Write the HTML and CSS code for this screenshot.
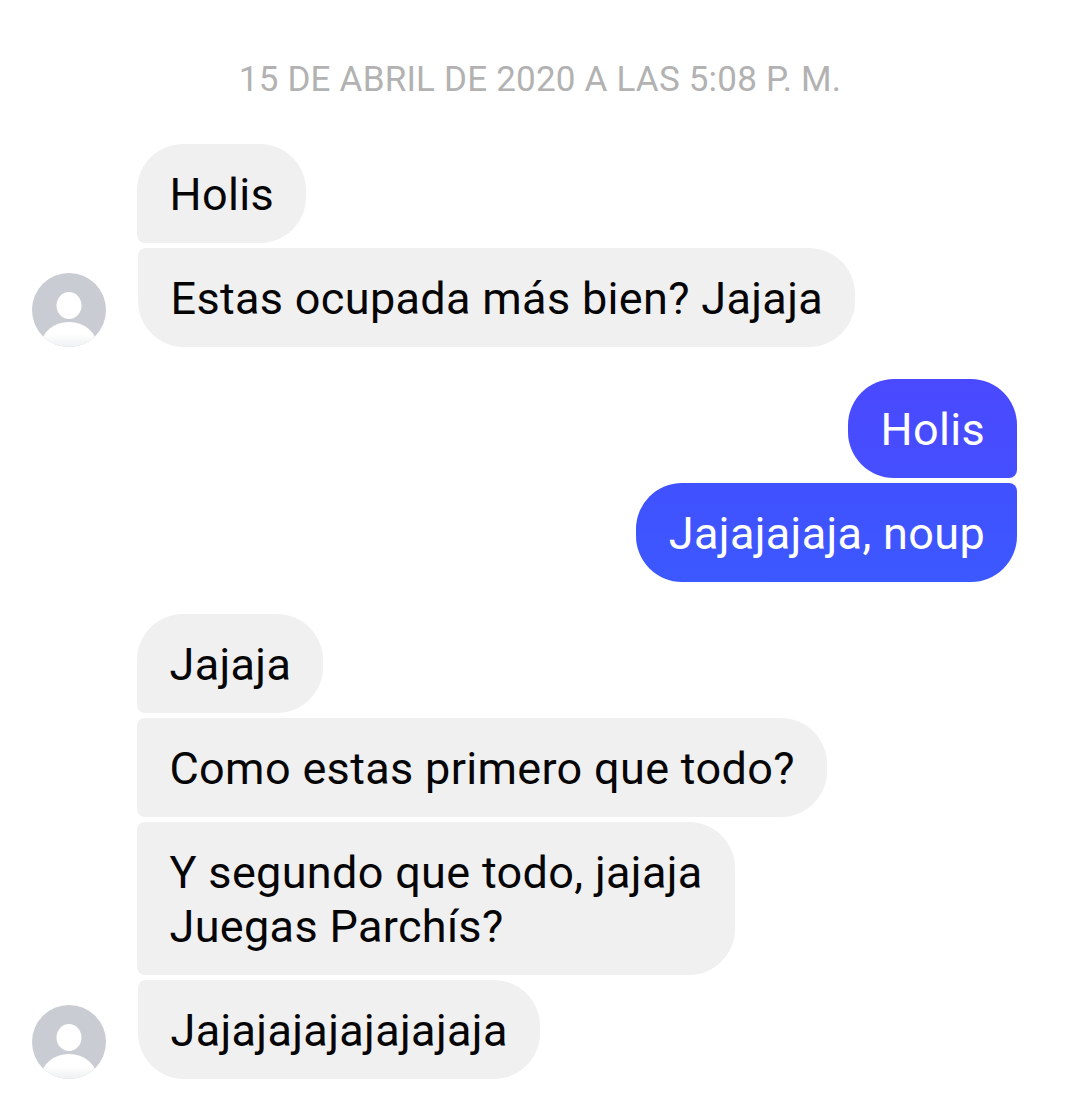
FILE: index.html
```html
<!DOCTYPE html>
<html lang="es">
<head>
<meta charset="utf-8">
<title>Chat</title>
<link rel="stylesheet" href="styles.css">
</head>
<body>
<main class="thread">
  <p class="stamp">15 DE ABRIL DE 2020 A LAS 5:08 P. M.</p>

  <section class="group in first">
    <div class="avatar-col">
      <svg class="avatar" viewBox="0 0 74 74"><defs><linearGradient id="a1" x1="0" y1="0" x2="0" y2="1"><stop offset="0.25" stop-color="#fff"/><stop offset="0.52" stop-color="#eef0f1"/></linearGradient><clipPath id="c1"><circle cx="37" cy="37" r="37"/></clipPath></defs><circle cx="37" cy="37" r="37" fill="#c9ccd3"/><ellipse cx="37" cy="32.5" rx="12.5" ry="13.5" fill="#fff"/><g clip-path="url(#c1)"><ellipse cx="37" cy="73" rx="28" ry="24" fill="url(#a1)"/></g></svg>
    </div>
    <div class="bubbles">
      <div class="bubble other top">Holis</div>
      <div class="bubble other bottom nudge">Estas ocupada más bien? Jajaja</div>
    </div>
  </section>

  <section class="group out">
    <div class="bubbles">
      <div class="bubble me me-top top">Holis</div>
      <div class="bubble me me-bottom bottom">Jajajajaja, noup</div>
    </div>
  </section>

  <section class="group in">
    <div class="avatar-col">
      <svg class="avatar" viewBox="0 0 74 74"><defs><linearGradient id="a2" x1="0" y1="0" x2="0" y2="1"><stop offset="0.25" stop-color="#fff"/><stop offset="0.52" stop-color="#eef0f1"/></linearGradient><clipPath id="c2"><circle cx="37" cy="37" r="37"/></clipPath></defs><circle cx="37" cy="37" r="37" fill="#c9ccd3"/><ellipse cx="37" cy="32.5" rx="12.5" ry="13.5" fill="#fff"/><g clip-path="url(#c2)"><ellipse cx="37" cy="73" rx="28" ry="24" fill="url(#a2)"/></g></svg>
    </div>
    <div class="bubbles">
      <div class="bubble other top">Jajaja</div>
      <div class="bubble other middle">Como estas primero que todo?</div>
      <div class="bubble other middle">Y segundo que todo, jajaja<br>Juegas Parchís?</div>
      <div class="bubble other bottom nudge">Jajajajajajajajaja</div>
    </div>
  </section>
</main>
</body>
</html>
```

FILE: styles.css
```css
* { box-sizing: border-box; }

html, body {
  margin: 0;
  background: #ffffff;
}

body {
  width: 1080px;
  height: 1097px;
  overflow: hidden;
  font-family: Roboto, "Liberation Sans", sans-serif;
}

.thread {
  display: flex;
  flex-direction: column;
  padding: 0 63px 0 32px;
}

.stamp {
  margin: 58px 0 47px;
  height: 39px;
  line-height: 44px;
  text-align: center;
  font-size: 35px;
  letter-spacing: 0.2px;
  color: #b2b2b2;
  padding-left: 31px;
}

.group {
  display: flex;
  margin-bottom: 32px;
}

.group.out {
  justify-content: flex-end;
}

.avatar-col {
  width: 105px;
  display: flex;
  align-items: flex-end;
  flex: none;
}

.avatar {
  display: block;
  width: 74px;
  height: 74px;
}

.bubbles {
  display: flex;
  flex-direction: column;
  gap: 5px;
}

.out .bubbles {
  align-items: flex-end;
}

.in .bubbles {
  align-items: flex-start;
}

.bubble {
  padding: 24px 32px 21px 32.5px;
  font-size: 45px;
  letter-spacing: 0.33px;
  line-height: 54px;
  border-radius: 46px;
}

.nudge {
  margin-left: 1px;
}

.other {
  background: #f0f0f1;
  color: #050505;
}

.me {
  color: #ffffff;
}

.me-top {
  background: linear-gradient(#4a49ff, #454fff);
}

.me-bottom {
  background: linear-gradient(#4051ff, #3c58ff);
}

.in .top { border-bottom-left-radius: 8px; }
.in .middle { border-top-left-radius: 8px; border-bottom-left-radius: 8px; }
.in .bottom { border-top-left-radius: 8px; }

.out .top { border-bottom-right-radius: 8px; }
.out .bottom { border-top-right-radius: 8px; }
```
